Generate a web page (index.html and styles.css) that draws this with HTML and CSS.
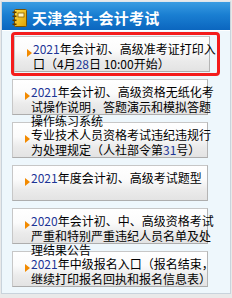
FILE: index.html
```html
<!DOCTYPE html>
<html lang="zh-CN">
<head>
<meta charset="utf-8">
<title>天津会计-会计考试</title>
<link rel="stylesheet" href="styles.css">
</head>
<body>
<div class="panel">
  <div class="header">
    <svg class="icon" width="15" height="18" viewBox="0 0 15 18">
      <defs>
        <linearGradient id="g" x1="0" y1="0" x2="1" y2="1">
          <stop offset="0" stop-color="#ffe14a"/>
          <stop offset="1" stop-color="#e0a000"/>
        </linearGradient>
      </defs>
      <rect x="2.5" y="0.5" width="12" height="17" rx="1" fill="url(#g)" stroke="#7a5200"/>
      <rect x="6" y="4" width="6" height="4" fill="#fff6c0" stroke="#8a6000" stroke-width="0.8"/>
      <rect x="0.5" y="2.5" width="4" height="1.6" fill="#5a3a00"/>
      <rect x="0.5" y="6.5" width="4" height="1.6" fill="#5a3a00"/>
      <rect x="0.5" y="10.5" width="4" height="1.6" fill="#5a3a00"/>
      <rect x="0.5" y="14.5" width="4" height="1.6" fill="#5a3a00"/>
    </svg>
    <span class="title">天津会计-会计考试</span>
  </div>
  <div class="content">
    <div class="hot">
      <div class="item"><div class="t"><span class="num">2021</span>年会计初、高级准考证打印入口（4月<span class="num">28</span>日 10:00开始）</div></div>
    </div>
    <div class="item"><div class="t"><span class="num">2021</span>年会计初、高级资格无纸化考试操作说明，答题演示和模拟答题操作练习系统</div></div>
    <div class="item"><div class="t">专业技术人员资格考试违纪违规行为处理规定（人社部令第<span class="num">31</span>号）</div></div>
    <div class="item"><div class="t"><span class="num">2021</span>年度会计初、高级考试题型</div></div>
    <div class="item"><div class="t"><span class="num">2020</span>年会计初、中、高级资格考试严重和特别严重违纪人员名单及处理结果公告</div></div>
    <div class="item"><div class="t"><span class="num">2021</span>年中级报名入口（报名结束，继续打印报名回执和报名信息表）</div></div>
  </div>
</div>
</body>
</html>
```
FILE: styles.css
```css
html, body {
  margin: 0;
  padding: 0;
}
body {
  width: 232px;
  height: 298px;
  background: #e9e9e9;
  font-family: "Noto Sans CJK SC", "Liberation Sans", sans-serif;
  overflow: hidden;
}
.panel {
  margin: 1px 1px 0 1px;
  border: 1px solid #c9d3dc;
  border-top: 1px solid #dfe6ec;
  background: #eef7fc;
}
.header {
  height: 28px;
  background: linear-gradient(#3b9de2 0%, #1a7fd2 45%, #0b66bf 100%);
  display: flex;
  align-items: center;
  border-bottom: 1px solid #ffffff;
}
.icon {
  margin-left: 10px;
  margin-top: 3px;
  flex: none;
}
.title {
  margin-left: 5px;
  color: #ffffff;
  font-size: 15px;
  font-weight: bold;
  line-height: 18px;
  margin-top: 4px;
  letter-spacing: 0.2px;
}
.content {
  padding: 1px 0 6px 10px;
  display: flex;
  flex-direction: column;
  align-items: flex-start;
}
.hot {
  margin-left: -1px;
  width: 209px;
  box-sizing: border-box;
  border: 3px solid #f41c1c;
  border-radius: 4px;
  padding: 1px 7px 1px 0;
}
.item {
  width: 196px;
  height: 36px;
  box-sizing: border-box;
  border: 1px solid #c7c7c7;
  border-right-color: #b4b4b4;
  border-bottom-color: #adadad;
  background: linear-gradient(#ffffff 0%, #fbfbfb 40%, #ebebeb 70%, #e3e3e3 100%);
  padding: 5px 0 0 18px;
  font-size: 12px;
  line-height: 14px;
  color: #000;
}
.content > .item {
  margin-top: 7px;
}
.hot + .item {
  margin-top: 3px;
}
.t {
  width: 184px;
  position: relative;
  z-index: 1;
}
.t::before {
  content: "";
  display: inline-block;
  width: 0;
  height: 0;
  border-left: 5px solid #f28a00;
  border-top: 4px solid transparent;
  border-bottom: 4px solid transparent;
  margin-left: -6px;
  margin-right: 1px;
  vertical-align: -3px;
}
.num {
  color: #1c3596;
}
```
